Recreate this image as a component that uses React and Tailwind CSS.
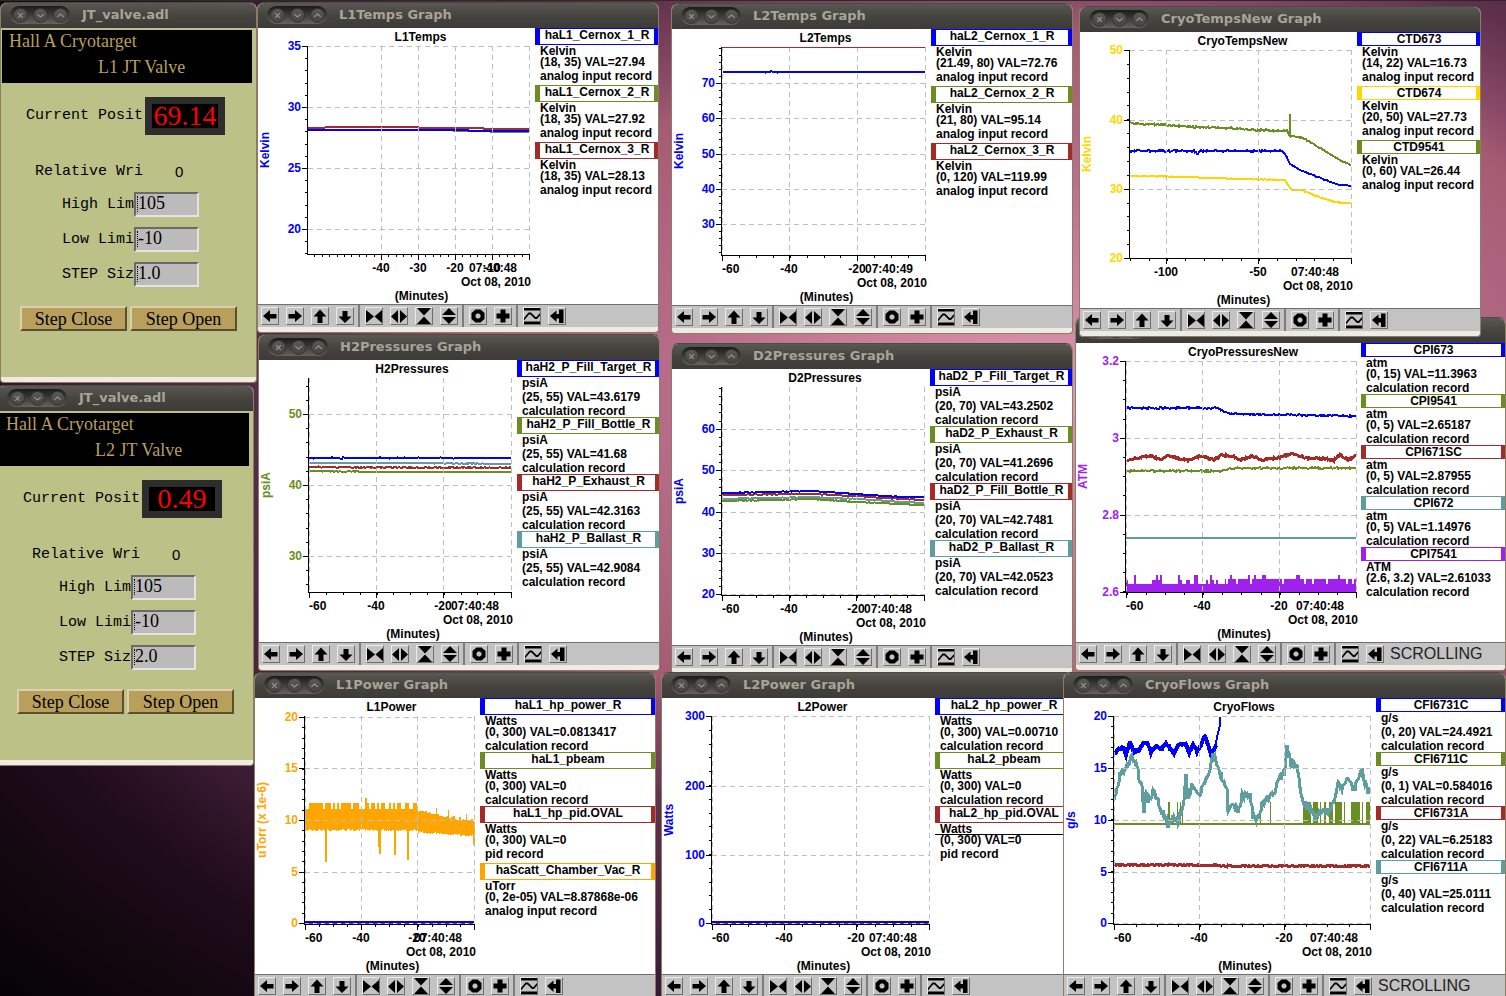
import { useState } from 'react'
import clsx from 'clsx'

const BLUE = '#0000ff'
const OLIVE = '#6b8e23'
const BROWN = '#a52a2a'
const TEAL = '#5f9ea0'
const GOLD = '#ffd700'
const ORANGE = '#ffa500'
const PURPLE = '#a020f0'

const FILLS = {
  [BLUE]: 'border-[#0000ff]',
  [OLIVE]: 'border-[#6b8e23]',
  [BROWN]: 'border-[#a52a2a]',
  [TEAL]: 'border-[#5f9ea0]',
  [GOLD]: 'border-[#ffd700]',
  [ORANGE]: 'border-[#ffa500]',
  [PURPLE]: 'border-[#a020f0]',
}

// repeatable noise in -1..1
const noise = (x, seed) => {
  const v = Math.sin(x * 127.1 + seed * 311.7) * 43758.5453
  return (v - Math.floor(v)) * 2 - 1
}

// one sample per pixel between the key points, with jitter on top
const trace = (keys, amp = 0, seed = 1) => {
  const out = []
  for (let i = 0; i < keys.length - 1; i++) {
    const [xa, ya] = keys[i]
    const [xb, yb] = keys[i + 1]
    for (let x = xa; x < xb; x++) {
      const y = ya + ((yb - ya) * (x - xa)) / (xb - xa)
      out.push(`${x},${(y + noise(x, seed) * amp).toFixed(1)}`)
    }
  }
  out.push(keys[keys.length - 1].join(','))
  return out.join(' ')
}

const range = (a, b) => Array.from({ length: b - a + 1 }, (_, i) => a + i)

// vertical strokes as one path
const bars = (list) => list.map(([x, a, b]) => `M${x + 0.5} ${a}V${b}`).join('')

const vacuumBars = range(50, 219).map((x) => {
  const late = x > 162
  const fade = late ? (x - 162) / 57 : 0
  let top = late ? 113 + fade * 10 + noise(x >> 1, 3) * 2 : noise(x >> 1, 4) > -0.2 ? 105 : 111
  let bottom = (late ? 134 + fade * 4 : 132) + noise(x, 5)
  if (x === 110 || x === 111) top = 100
  if (x === 211 || x === 181 || x === 193) top -= 6
  if (x === 70 || x === 71) bottom = 164
  if (x === 123) bottom = 149
  if (x === 124 || x === 125) bottom = 156
  if (x === 139 || x === 140) bottom = 157
  if (x === 152 || x === 153) bottom = 162
  if (x > 217) bottom = 147
  return [x, top, bottom]
})

const pressureBars = range(50, 279).map((x) => {
  const n = noise(x >> 1, 9)
  const busy = x > 148
  let top = busy ? 236 : 241
  if (busy ? n > 0.7 : n > 0.9) top = 232
  else if (busy ? n < -0.75 : n > 0.3) top = busy ? 241 : 237
  return [x, top, 249]
})

const flowSpikes = [
  104, 105, 113, 116, 118, 196, 206,
  ...range(239, 246), ...range(249, 253), 256, 260, 261, ...range(265, 268),
  ...range(271, 277), 280, ...range(287, 295), 298, ...range(302, 305),
].map((x) => [x, 104, 126])

const GRAPHS = [
  {
    name: 'CryoPressuresNew', place: 'left-[1075px] top-[317px] w-[431px]', w: 285, h: 299, legendWidth: 'w-[144px]',
    unit: 'ATM', color: PURPLE, x1: 280, bottom: 249, scrolling: true,
    ys: [['3.2', 18], ['3', 95], ['2.8', 172], ['2.6', 249]], yMinor: 19.2,
    xs: [['-60', 50], ['-40', 126], ['-20', 203], ['', 280]], xMinor: 19.1, time: '07:40:48',
    lines: [
      { color: BLUE, points: trace([[50, 65], [142, 65], [148, 69], [156, 71], [220, 72], [280, 73]], 0.8, 1) },
      { color: OLIVE, points: trace([[50, 128], [145, 128], [158, 125], [280, 125]], 0.8, 2) },
      { color: BROWN, w: 3, points: trace([[50, 118], [60, 115], [76, 113], [85, 117], [92, 112], [104, 116], [112, 117], [125, 113], [138, 117], [145, 112], [156, 113], [165, 117], [175, 113], [187, 117], [200, 115], [217, 111], [230, 115], [250, 116], [258, 117], [264, 112], [272, 117], [280, 113]], 1, 3) },
      { color: TEAL, points: trace([[50, 195], [280, 195]], 0.4, 4) },
    ],
    fill: { color: PURPLE, d: bars(pressureBars) },
    legend: [
      [BLUE, 'CPI673', 'atm', '(0, 15) VAL=11.3963', 'calculation record'],
      [OLIVE, 'CPI9541', 'atm', '(0, 5) VAL=2.65187', 'calculation record'],
      [BROWN, 'CPI671SC', 'atm', '(0, 5) VAL=2.87955', 'calculation record'],
      [TEAL, 'CPI672', 'atm', '(0, 5) VAL=1.14976', 'calculation record'],
      [PURPLE, 'CPI7541', 'ATM', '(2.6, 3.2) VAL=2.61033', 'calculation record'],
    ],
  },
  {
    name: 'L1Temps', place: 'left-[257px] top-[2px] w-[402px]', w: 277, h: 276, legendWidth: 'w-[123px]',
    unit: 'Kelvin', color: BLUE, x1: 271, bottom: 226,
    ys: [['35', 18], ['30', 79], ['25', 140], ['20', 201]], yMinor: 12.2,
    xs: [['-40', 123], ['-30', 160], ['-20', 197], ['-10', 234], ['', 271]], xMinor: 7.4, time: '07:40:48',
    lines: [
      { color: OLIVE, points: trace([[50, 102], [190, 102], [200, 103], [271, 104]]) },
      { color: BROWN, points: '50,100 85,99 160,99 161,100 225,100 226,101 271,101' },
      { color: BLUE, points: '50,102 210,102 211,103 271,103' },
    ],
    legend: [
      [BLUE, 'haL1_Cernox_1_R', 'Kelvin', '(18, 35) VAL=27.94', 'analog input record'],
      [OLIVE, 'haL1_Cernox_2_R', 'Kelvin', '(18, 35) VAL=27.92', 'analog input record'],
      [BROWN, 'haL1_Cernox_3_R', 'Kelvin', '(18, 35) VAL=28.13', 'analog input record'],
    ],
  },
  {
    name: 'L2Temps', place: 'left-[671px] top-[3px] w-[402px]', w: 259, h: 276, legendWidth: 'w-[141px]',
    unit: 'Kelvin', color: BLUE, x1: 253, bottom: 226,
    ys: [['70', 54], ['60', 89], ['50', 125], ['40', 160], ['30', 195]], yMinor: 7.06,
    xs: [['-60', 50], ['-40', 117], ['-20', 185], ['', 253]], xMinor: 16.9, time: '07:40:49',
    lines: [
      { color: BROWN, w: 1, over: true, points: '50,18.5 253,18.5' },
      { color: BLUE, points: trace([[51, 43], [112, 43]], 0.6, 6) + ' 253,43' },
    ],
    legend: [
      [BLUE, 'haL2_Cernox_1_R', 'Kelvin', '(21.49, 80) VAL=72.76', 'analog input record'],
      [OLIVE, 'haL2_Cernox_2_R', 'Kelvin', '(21, 80) VAL=95.14', 'analog input record'],
      [BROWN, 'haL2_Cernox_3_R', 'Kelvin', '(0, 120) VAL=119.99', 'analog input record'],
    ],
  },
  {
    name: 'CryoTempsNew', place: 'left-[1079px] top-[6px] w-[402px]', w: 277, h: 276, legendWidth: 'w-[123px]',
    unit: 'Kelvin', color: GOLD, x1: 271, bottom: 226,
    ys: [['50', 18], ['40', 88], ['30', 157], ['20', 226]], yMinor: 13.87,
    xs: [['-100', 86], ['-50', 178], ['', 271]], xMinor: 18.4, time: '07:40:48',
    lines: [
      { color: OLIVE, points: trace([[50, 91], [62, 92], [90, 93], [115, 95], [150, 96], [175, 98], [207, 99], [209, 103]], 1, 7) + ' 210,104 210,82 210,104 ' + trace([[211, 104], [223, 106], [230, 110], [250, 122], [262, 129], [271, 133]], 0.4, 7) },
      { color: BLUE, points: trace([[50, 119], [114, 119], [118, 122], [120, 119], [202, 119]], 0.9, 8) + ' ' + trace([[203, 120], [206, 124], [210, 132], [218, 137], [230, 142], [245, 148], [260, 153], [271, 154]], 0.4, 8) },
      { color: GOLD, points: trace([[50, 144], [118, 145], [120, 146], [205, 148], [208, 153], [212, 158], [222, 158], [236, 164], [252, 169], [262, 171], [271, 171]], 0.4, 9) },
    ],
    legend: [
      [BLUE, 'CTD673', 'Kelvin', '(14, 22) VAL=16.73', 'analog input record'],
      [GOLD, 'CTD674', 'Kelvin', '(20, 50) VAL=27.73', 'analog input record'],
      [OLIVE, 'CTD9541', 'Kelvin', '(0, 60) VAL=26.44', 'analog input record'],
    ],
  },
  {
    name: 'H2Pressures', place: 'left-[258px] top-[334px] w-[402px]', w: 258, h: 282, legendWidth: 'w-[142px]',
    unit: 'psiA', color: OLIVE, x1: 252, bottom: 232,
    ys: [['50', 54], ['40', 125], ['30', 196]], yMinor: 14.2,
    xs: [['-60', 50], ['-40', 117], ['-20', 184], ['', 252]], xMinor: 16.8, time: '07:40:48',
    lines: [
      { color: BLUE, points: trace([[50, 98], [252, 98]], 0.6, 1) },
      { color: TEAL, points: trace([[50, 103], [160, 103], [252, 104]], 0.4, 2) },
      { color: BROWN, points: trace([[50, 107], [252, 108]], 0.7, 3) },
      { color: OLIVE, points: trace([[50, 111], [120, 112], [252, 112]], 0.4, 4) },
    ],
    legend: [
      [BLUE, 'haH2_P_Fill_Target_R', 'psiA', '(25, 55) VAL=43.6179', 'calculation record'],
      [OLIVE, 'haH2_P_Fill_Bottle_R', 'psiA', '(25, 55) VAL=41.68', 'calculation record'],
      [BROWN, 'haH2_P_Exhaust_R', 'psiA', '(25, 55) VAL=42.3163', 'calculation record'],
      [TEAL, 'haH2_P_Ballast_R', 'psiA', '(25, 55) VAL=42.9084', 'calculation record'],
    ],
  },
  {
    name: 'D2Pressures', place: 'left-[671px] top-[343px] w-[402px]', w: 258, h: 276, legendWidth: 'w-[142px]',
    unit: 'psiA', color: BLUE, x1: 252, bottom: 226,
    ys: [['60', 60], ['50', 101], ['40', 143], ['30', 184], ['20', 225]], yMinor: 8.27,
    xs: [['-60', 50], ['-40', 117], ['-20', 184], ['', 252]], xMinor: 16.8, time: '07:40:48',
    lines: [
      { color: OLIVE, points: trace([[50, 132], [140, 130], [184, 133], [230, 135], [252, 136]], 0.4, 4) },
      { color: TEAL, points: trace([[50, 130], [140, 128], [184, 130], [230, 133], [252, 134]], 0.4, 3) },
      { color: BROWN, points: trace([[50, 126], [140, 125], [184, 127], [230, 130], [252, 131]], 0.4, 2) },
      { color: BLUE, points: trace([[50, 124], [140, 122], [184, 125], [230, 128], [252, 128]], 0.3, 1) },
    ],
    legend: [
      [BLUE, 'haD2_P_Fill_Target_R', 'psiA', '(20, 70) VAL=43.2502', 'calculation record'],
      [OLIVE, 'haD2_P_Exhaust_R', 'psiA', '(20, 70) VAL=41.2696', 'calculation record'],
      [BROWN, 'haD2_P_Fill_Bottle_R', 'psiA', '(20, 70) VAL=42.7481', 'calculation record'],
      [TEAL, 'haD2_P_Ballast_R', 'psiA', '(20, 70) VAL=42.0523', 'calculation record'],
    ],
  },
  {
    name: 'L1Power', place: 'left-[254px] top-[672px] w-[402px]', w: 225, h: 276, legendWidth: 'w-[175px]',
    unit: 'uTorr (x 1e-6)', color: ORANGE, x1: 219, bottom: 226,
    ys: [['20', 19], ['15', 70], ['10', 122], ['5', 174], ['0', 225]], yMinor: 10.3,
    xs: [['-60', 50], ['-40', 106], ['-20', 162], ['', 219]], xMinor: 14.1, time: '07:40:48',
    fill: { color: ORANGE, d: bars(vacuumBars) },
    lines: [
      { color: BLUE, over: true, points: '50,224 219,224' },
      { color: BROWN, w: 1, over: true, dash: '4 4', points: '54,225.5 219,225.5' },
    ],
    legend: [
      [BLUE, 'haL1_hp_power_R', 'Watts', '(0, 300) VAL=0.0813417', 'calculation record'],
      [OLIVE, 'haL1_pbeam', 'Watts', '(0, 300) VAL=0', 'calculation record'],
      [BROWN, 'haL1_hp_pid.OVAL', 'Watts', '(0, 300) VAL=0', 'pid record'],
      [ORANGE, 'haScatt_Chamber_Vac_R', 'uTorr', '(0, 2e-05) VAL=8.87868e-06', 'analog input record'],
    ],
  },
  {
    name: 'L2Power', place: 'left-[661px] top-[672px] w-[412px]', w: 273, h: 276, legendWidth: 'w-[137px]',
    unit: 'Watts', color: BLUE, x1: 267, bottom: 226, rule: true,
    ys: [['300', 18], ['200', 88], ['100', 157], ['0', 225]], yMinor: 13.8,
    xs: [['-60', 50], ['-40', 122], ['-20', 194], ['', 267]], xMinor: 18.1, time: '07:40:48',
    lines: [
      { color: BLUE, over: true, points: '50,224 267,224' },
      { color: BROWN, w: 1, over: true, dash: '4 4', points: '54,225.5 267,225.5' },
    ],
    legend: [
      [BLUE, 'haL2_hp_power_R', 'Watts', '(0, 300) VAL=0.00710', 'calculation record'],
      [OLIVE, 'haL2_pbeam', 'Watts', '(0, 300) VAL=0', 'calculation record'],
      [BROWN, 'haL2_hp_pid.OVAL', 'Watts', '(0, 300) VAL=0', 'pid record'],
    ],
  },
  {
    name: 'CryoFlows', place: 'left-[1063px] top-[672px] w-[443px]', w: 312, h: 276, legendWidth: 'w-[129px]',
    unit: 'g/s', color: BLUE, x1: 306, bottom: 226, scrolling: true,
    ys: [['20', 18], ['15', 70], ['10', 122], ['5', 174], ['0', 225]], yMinor: 10.35,
    xs: [['-60', 50], ['-40', 135], ['-20', 220], ['', 306]], xMinor: 21.3, time: '07:40:48',
    fill: { color: OLIVE, d: bars(flowSpikes) },
    lines: [
      { color: OLIVE, points: '50,126 306,126' },
      { color: BROWN, w: 3, points: trace([[50, 167], [155, 167], [157, 168], [306, 168]], 0.7, 5) },
      { color: BLUE, w: 4, points: trace([[50, 56], [54, 52], [59, 49], [62, 56], [66, 44], [70, 54], [75, 52], [79, 46], [83, 44], [87, 54], [93, 47], [97, 52], [102, 45], [106, 50], [110, 56], [114, 47], [122, 47], [125, 54], [129, 47], [133, 53], [136, 49], [141, 38], [145, 49], [147, 56], [152, 47]], 1, 6) },
      { color: BLUE, points: '151,48 152,45 154,35 156,27 156,19' },
      { color: TEAL, w: 3, points: trace([[50, 104], [56, 77], [63, 67], [68, 59], [73, 70], [78, 90], [80, 114], [82, 94], [84, 104], [90, 90], [96, 110], [103, 122], [104, 132], [106, 122], [114, 122], [119, 110], [122, 77], [124, 100], [129, 87], [135, 100], [139, 87], [144, 77], [149, 57], [154, 67], [159, 84], [163, 90], [164, 112], [169, 104], [174, 114], [178, 97], [186, 99], [189, 117], [193, 120], [199, 104], [209, 97], [214, 84], [221, 74], [223, 47], [226, 64], [233, 70], [237, 94], [241, 107], [246, 110], [251, 120], [259, 110], [264, 114], [269, 107], [274, 84], [278, 90], [283, 77], [289, 94], [298, 74], [301, 87], [306, 95]], 4, 7) },
    ],
    legend: [
      [BLUE, 'CFI6731C', 'g/s', '(0, 20) VAL=24.4921', 'calculation record'],
      [OLIVE, 'CFI6711C', 'g/s', '(0, 1) VAL=0.584016', 'calculation record'],
      [BROWN, 'CFI6731A', 'g/s', '(0, 22) VAL=6.25183', 'calculation record'],
      [TEAL, 'CFI6711A', 'g/s', '(0, 40) VAL=25.0111', 'calculation record'],
    ],
  },
]

const TOOL_GROUPS = [
  [
    ['Pan left', 'M1 8L8 2V6H14.5V10.5H8V14Z'],
    ['Pan right', 'M15 8L8 2V6H1.5V10.5H8V14Z'],
    ['Pan up', 'M8 1.5L14.5 8.5H10.5V15H5.5V8.5H1.5Z'],
    ['Pan down', 'M8 15L14.5 8.5H10.5V3H5.500V8.500H1.500Z'],
  ],
  [
    ['Zoom in X', 'M0 2L8 8.5L0 15ZM16 2L8.5 8.5L16 15Z'],
    ['Zoom out X', 'M7 2V15L0 8.5ZM9 2V15L16 8.5Z'],
    ['Zoom in Y', 'M1 0H15L8 7.5ZM1 16H15L8 8.5Z'],
    ['Zoom out Y', 'M1 7L8 0L15 7ZM1 9L8 16L15 9Z'],
  ],
  [
    ['Zoom out', 'M5.500 1.500H10.500L14.500 5V11L10.500 14.500H5.500L1.500 11V5ZM7 5.500L5.500 7V9L7 10.500H9L10.500 9V7L9 5.500Z'],
    ['Zoom in', 'M5.500 1.500H10.500V5.500H14.500V10.500H10.500V14.500H5.500V10.500H1.500V5.500H5.500Z'],
  ],
  [
    ['Autoscale', 'M0 0H16V2.500H0ZM0 13.500H16V16H0ZM0 10L4.500 4.500H7L11.500 9H12.500L16 5V7.500L13 11H11L6.500 6.500H5L0 12.500Z'],
    ['Autoscroll', 'M1 8L7.500 2.500V6H10V1.500H14.500V15H10V10.500H7.500V14Z'],
  ],
]

function TitleBar({ children }) {
  return (
    <header className="flex h-[25px] items-center gap-3 bg-linear-to-b from-[#5a5852] via-[#45443f] to-[#3c3b37] pb-px pl-[9px]">
      <div className="flex h-[18px] w-[60px] items-center justify-center gap-[5px] rounded-full bg-linear-to-b from-[#1c1b19] to-[#64635d]">
        {[
          ['Close', 'M4.500 4.500L9.500 9.500M9.500 4.500L4.500 9.500'],
          ['Minimize', 'M3.500 5.500L7 8.500L10.500 5.500'],
          ['Maximize', 'M3.500 8.500L7 5.500L10.500 8.500'],
        ].map(([label, d]) => (
          <button key={label} type="button" aria-label={label} className="h-[15px] w-[15px] rounded-full border border-[#383733] bg-linear-to-b from-[#5a5954] to-[#454440]">
            <svg viewBox="0 0 14 14" className="h-[13px] w-[13px]" fill="none" stroke="#9a988f" strokeWidth="1.2">
              <path d={d} />
            </svg>
          </button>
        ))}
      </div>
      <h2 className="font-['DejaVu_Sans',sans-serif] text-[13px] font-bold whitespace-nowrap text-[#a8a498]">{children}</h2>
    </header>
  )
}

function Window({ title, place, children }) {
  return (
    <section className={clsx('absolute overflow-hidden rounded-t-[7px] rounded-b-[4px] border border-[#8c7c62] border-t-[#4d4b45] bg-[#f0ebe2] pb-[5px]', place)}>
      <TitleBar>{title}</TitleBar>
      {children}
    </section>
  )
}

function Plot({ graph }) {
  const { name, w, h, unit, color, x1, bottom, ys, yMinor, xs, xMinor, time, lines, fill } = graph
  const x0 = 50
  const mid = (x0 + x1) / 2

  const yMinors = []
  for (let y = ys[0][1]; y > 18; y -= yMinor) yMinors.push(Math.round(y))
  for (let y = ys[0][1] + yMinor; y < bottom; y += yMinor) yMinors.push(Math.round(y))
  const xMinors = []
  for (let x = x1; x >= x0; x -= xMinor) xMinors.push(Math.round(x))

  const drawLine = (l, i) => (
    <polyline key={i} points={l.points} fill="none" stroke={l.color} strokeWidth={l.w || 2} strokeDasharray={l.dash} shapeRendering="crispEdges" />
  )

  return (
    <svg width={w} height={h} className="shrink-0 font-['Liberation_Sans',Arial,sans-serif] text-[12px] font-bold" role="img" aria-label={name}>
      <text x={mid + 2} y="13" textAnchor="middle">{name}</text>
      <text transform={`translate(11 ${(18 + bottom) / 2}) rotate(-90)`} textAnchor="middle" fill={color}>{unit}</text>

      {fill && <path d={fill.d} stroke={fill.color} strokeWidth="1" shapeRendering="crispEdges" />}
      {lines.filter((l) => !l.over).map(drawLine)}

      <g stroke="#bebebe" strokeDasharray="5 4" shapeRendering="crispEdges">
        {ys.map(([label, y]) => <path key={label} d={`M${x0} ${y + 0.5}H${x1}`} />)}
        {xs.map(([label, x]) => <path key={label} d={`M${x + 0.5} 18V${bottom}`} />)}
      </g>
      {lines.filter((l) => l.over).map(drawLine)}

      <g stroke="#000" shapeRendering="crispEdges">
        <path d={`M${x0 - 0.5} 18V${bottom + 0.5}H${x1 + 1}`} fill="none" />
        {ys.map(([label, y]) => <path key={label} d={`M${x0 - 6} ${y + 0.5}H${x0}`} />)}
        {yMinors.map((y) => <path key={y} d={`M${x0 - 3} ${y + 0.5}H${x0}`} />)}
        {xs.map(([label, x]) => <path key={label} d={`M${x + 0.5} ${bottom}V${bottom + 6}`} />)}
        {xMinors.map((x) => <path key={x} d={`M${x + 0.5} ${bottom}V${bottom + 3}`} />)}
      </g>

      {ys.map(([label, y]) => (
        <text key={label} x={x0 - 7} y={y + 4} textAnchor="end" fill={color}>{label}</text>
      ))}
      {xs.map(([label, x]) => (
        <text key={label} x={x} y={bottom + 18} textAnchor={x === x0 ? 'start' : 'middle'}>{label}</text>
      ))}
      <text x={x1 - 36} y={bottom + 18} textAnchor="middle">{time}</text>
      <text x={x1 + 2} y={bottom + 32} textAnchor="end">Oct 08, 2010</text>
      <text x={mid + 3} y={bottom + 46} textAnchor="middle">(Minutes)</text>
    </svg>
  )
}

// a row is taller when its text reaches below the baseline
const rowHeight = (text) => (/[gjpqy_(]/.test(text) ? 'h-[14px]' : 'h-[11px]')

function Legend({ items, width, rule }) {
  return (
    <ul className={clsx("relative ml-auto shrink-0 font-['Liberation_Sans',Arial,sans-serif] text-[12px] leading-[12px] font-bold whitespace-nowrap", width)}>
      {items.map(([color, name, unit, value, record]) => (
        <li key={name} className="pb-px">
          <div className={clsx('flex justify-center border-y border-r-4 border-l-5', FILLS[color], name.includes('_') ? 'h-[17px]' : 'h-[14px]')}>{name}</div>
          <div className="pl-[5px]">
            <p className={rowHeight(unit)}>{unit}</p>
            <p className="h-[14px]">{value}</p>
            <p className={rowHeight(record)}>{record}</p>
          </div>
        </li>
      ))}
      {rule && <li className="absolute top-[136px] left-0 h-px w-full bg-black" aria-hidden="true" />}
    </ul>
  )
}

function Toolbar({ scrolling }) {
  return (
    <div className="flex h-[23px] items-center border-t border-[#6f6f6f] bg-[#c3c3c3] pl-[3px]">
      {TOOL_GROUPS.map((group, i) => (
        <div key={i} className={clsx('flex h-full items-center gap-[7px]', i > 0 && 'ml-1 border-l-2 border-[#7c7c7c] pl-[5px]')}>
          {group.map(([label, d]) => (
            <button key={label} type="button" aria-label={label} className="h-[18px] w-[18px] border border-t-[#ececec] border-r-[#6e6e6e] border-b-[#6e6e6e] border-l-[#ececec]">
              <svg viewBox="0 0 16 16" className="h-4 w-4">
                <path d={d} fillRule="evenodd" />
              </svg>
            </button>
          ))}
        </div>
      ))}
      {scrolling && <span className="ml-1.5 font-['Liberation_Sans',Arial,sans-serif] text-base leading-none text-[#222]">SCROLLING</span>}
    </div>
  )
}

function GraphWindow({ graph }) {
  return (
    <Window title={`${graph.name} Graph`} place={graph.place}>
      <div className="flex bg-white">
        <Plot graph={graph} />
        <Legend items={graph.legend} width={graph.legendWidth} rule={graph.rule} />
      </div>
      <Toolbar scrolling={graph.scrolling} />
    </Window>
  )
}

function ValveWindow({ id, place, position, step }) {
  const [values, setValues] = useState({ high: '105', low: '-10', step })
  const fields = [
    ['high', 'High Lim'],
    ['low', 'Low Limi'],
    ['step', 'STEP Siz'],
  ]

  return (
    <Window title="JT_valve.adl" place={place}>
      <div className="bg-[#bbc187] pt-0.5 pb-[46px] font-['Liberation_Mono',monospace] text-[15px] leading-5">
        <div className="mr-1 ml-px flex h-[53px] flex-col gap-1 bg-black font-['Liberation_Serif',serif] text-[18px] leading-[22px] text-[#b99f5c]">
          <p className="pl-[7px]">Hall A Cryotarget</p>
          <p className="pl-24">{id} JT Valve</p>
        </div>

        <div className="mt-[14px] flex items-center">
          <span className="w-[142px] text-right">Current Posit</span>
          <div className="ml-0.5 border-7 border-[#2d2d2d] bg-black">
            <output className="flex h-6 w-[66px] items-center justify-center font-['Liberation_Serif',serif] text-[28px] text-[#ff0000]">{position}</output>
          </div>
        </div>

        <div className="mt-[27px] flex">
          <span className="w-[142px] text-right">Relative Wri</span>
          <span className="ml-8 font-['Liberation_Sans',Arial,sans-serif]">0</span>
        </div>

        <div className="mt-[10px] flex flex-col gap-[10px]">
          {fields.map(([key, label]) => (
            <div key={key} className="flex items-center">
              <label htmlFor={`${id}-${key}`} className="w-[133px] text-right">{label}</label>
              <div className="relative border-2 border-t-[#6a6a6a] border-r-[#e3e3e3] border-b-[#e3e3e3] border-l-[#6a6a6a] bg-[#bbbbbb] before:absolute before:top-0.5 before:left-px before:h-4 before:border-l before:border-dotted before:border-black">
                <input
                  id={`${id}-${key}`}
                  value={values[key]}
                  onChange={(e) => setValues({ ...values, [key]: e.target.value })}
                  className="block h-[21px] w-[61px] pb-0.5 pl-0.5 font-['Liberation_Serif',serif] text-[18px] outline-none"
                />
              </div>
            </div>
          ))}
        </div>

        <div className="mt-[19px] flex gap-[3px] pl-[19px] font-['Liberation_Serif',serif] text-[18px]">
          {['Step Close', 'Step Open'].map((text) => (
            <button key={text} type="button" className="h-[25px] w-[107px] border-2 border-t-[#dccfae] border-r-[#5c4f2e] border-b-[#5c4f2e] border-l-[#dccfae] bg-[#b99f5c]">
              {text}
            </button>
          ))}
        </div>
      </div>
    </Window>
  )
}

export default function App() {
  return (
    <main className="relative min-h-screen overflow-hidden bg-[radial-gradient(1420px_895px_at_1050px_400px,#e097b2_0%,#b56a88_28%,#a55c72_41%,#8a4a68_45%,#5e304c_53%,#42203a_68%,#200c1b_80%,#040204_100%)] text-black">
      <div className="h-px bg-[#2c2a28]" />
      <ValveWindow id="L1" place="left-0 top-[2px] w-[257px]" position="69.14" step="1.0" />
      <ValveWindow id="L2" place="left-[-3px] top-[385px] w-[257px]" position="0.49" step="2.0" />
      {GRAPHS.map((graph) => (
        <GraphWindow key={graph.name} graph={graph} />
      ))}
    </main>
  )
}
